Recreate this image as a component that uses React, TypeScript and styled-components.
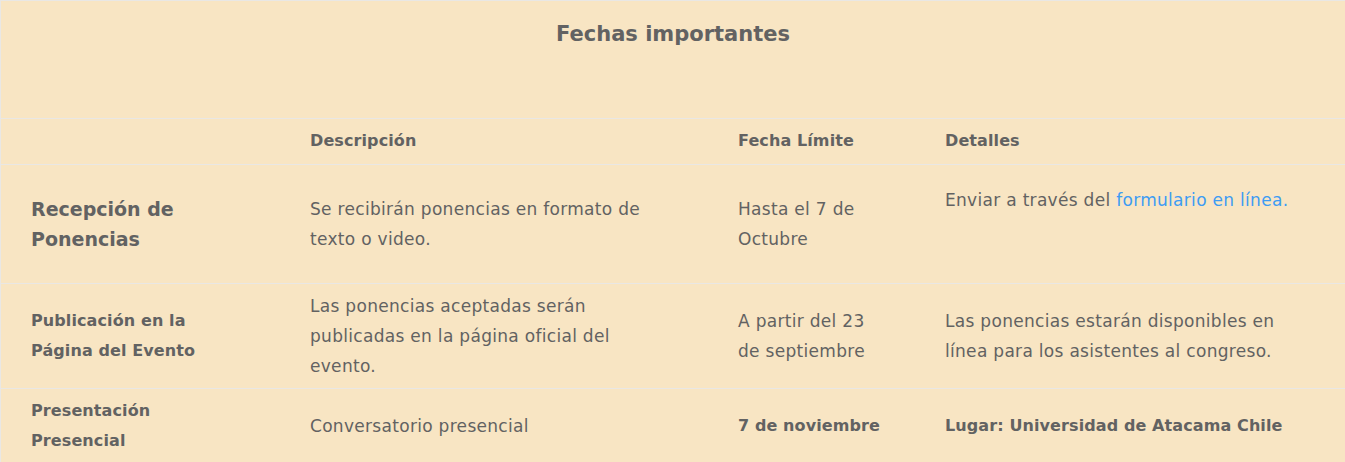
import React from "react";
import styled, { createGlobalStyle, css } from "styled-components";

const Global = createGlobalStyle`
  html, body { margin: 0; padding: 0; background: #ffffff; }
  body { font-family: "DejaVu Sans", "Liberation Sans", sans-serif; }
`;

const Page = styled.section`
  width: 1345px;
  box-sizing: border-box;
  background: #f8e5c3;
  border-top: 1px solid #e9e7e4;
  border-left: 1px solid #e9e7e4;
  color: #626262;
  overflow: hidden;
  height: 462px;
`;

const Title = styled.h2`
  margin: 0;
  height: 117px;
  box-sizing: border-box;
  padding-top: 18px;
  text-align: center;
  font-size: 21px;
  line-height: 30px;
  font-weight: 700;
  color: #626262;
`;

const Table = styled.table`
  width: 100%;
  border-collapse: separate;
  border-spacing: 0;
  table-layout: fixed;
  font-size: 17px;
  letter-spacing: 0.3px;
  line-height: 30px;
`;

const Row = styled.tr``;

const TallRow = styled.tr`
  && > td,
  && > th {
    padding-top: 29px;
    padding-bottom: 29px;
  }
`;

const cellBase = css`
  border-top: 1px solid #e9e7e4;
  vertical-align: middle;
  text-align: left;
`;

const boldText = css`
  font-weight: 700;
  font-size: 16px;
  letter-spacing: 0.1px;
`;

const HeadCell = styled.th`
  ${cellBase};
  ${boldText};
  padding: 7px 30px 8px;
`;

const Cell = styled.td<{ $bold?: boolean }>`
  ${cellBase};
  padding: 7px 30px;
  font-weight: 400;
  ${(p) => p.$bold && boldText};
`;

const LiftedCell = styled(Cell)`
  &&& {
    padding-top: 5px;
    padding-bottom: 53px;
  }
`;

const RowHead = styled.th<{ $big?: boolean }>`
  ${cellBase};
  ${boldText};
  padding: 7px 60px 7px 30px;
  ${(p) => p.$big && css`font-size: 19px; letter-spacing: 0;`}
`;

const Link = styled.a`
  color: #3e9cf3;
  text-decoration: none;
`;

export default function App() {
  return (
    <>
      <Global />
      <Page>
        <Title>Fechas importantes</Title>
        <Table>
          <colgroup>
            <col style={{ width: 279 }} />
            <col style={{ width: 428 }} />
            <col style={{ width: 207 }} />
            <col />
          </colgroup>
          <thead>
            <Row>
              <HeadCell />
              <HeadCell>Descripción</HeadCell>
              <HeadCell>Fecha Límite</HeadCell>
              <HeadCell>Detalles</HeadCell>
            </Row>
          </thead>
          <tbody>
            <TallRow>
              <RowHead $big>Recepción de Ponencias</RowHead>
              <Cell>Se recibirán ponencias en formato de texto o video.</Cell>
              <Cell>Hasta el 7 de Octubre</Cell>
              <LiftedCell>
                Enviar a través del <Link href="#">formulario en línea.</Link>
              </LiftedCell>
            </TallRow>
            <Row>
              <RowHead>Publicación en la Página del Evento</RowHead>
              <Cell>Las ponencias aceptadas serán publicadas en la página oficial del evento.</Cell>
              <Cell>A partir del 23 de septiembre</Cell>
              <Cell>Las ponencias estarán disponibles en línea para los asistentes al congreso.</Cell>
            </Row>
            <Row>
              <RowHead>Presentación Presencial</RowHead>
              <Cell>Conversatorio presencial</Cell>
              <Cell $bold>7 de noviembre</Cell>
              <Cell $bold>Lugar: Universidad de Atacama Chile</Cell>
            </Row>
          </tbody>
        </Table>
      </Page>
    </>
  );
}
